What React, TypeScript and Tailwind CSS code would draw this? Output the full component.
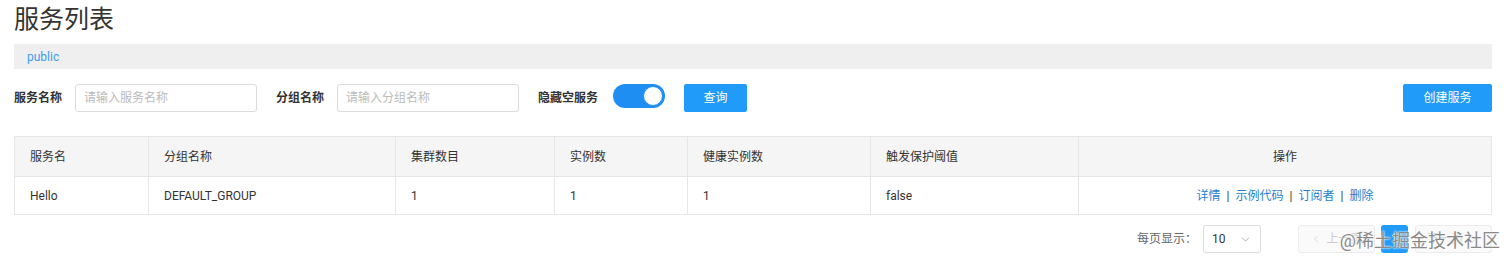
import { ChevronDown, ChevronLeft, ChevronRight } from 'lucide-react';

const columns = [
  { title: '服务名', width: 'w-[134px]' },
  { title: '分组名称', width: 'w-[247px]' },
  { title: '集群数目', width: 'w-[159px]' },
  { title: '实例数', width: 'w-[133px]' },
  { title: '健康实例数', width: 'w-[183px]' },
  { title: '触发保护阈值', width: 'w-[208px]' },
];

const row = ['Hello', 'DEFAULT_GROUP', '1', '1', '1', 'false'];

const actions = ['详情', '示例代码', '订阅者', '删除'];

function Field({ label, placeholder }: { label: string; placeholder: string }) {
  return (
    <div className="flex items-center">
      <span className="w-[61px] text-[12px] font-bold text-[#333]">{label}</span>
      <input
        type="text"
        placeholder={placeholder}
        className="h-[28px] w-[182px] rounded-[3px] border border-[#dcdcdc] bg-white px-[8px] text-[12px] outline-none placeholder:text-[#bbb]"
      />
    </div>
  );
}

export default function App() {
  return (
    <div
      className="relative h-[264px] w-[1512px] overflow-hidden bg-white px-[14px] pr-[20px] text-[#333]"
      style={{ fontFamily: 'Roboto, "Noto Sans CJK SC", sans-serif' }}
    >
      <h1 className="h-[44px] text-[25px] leading-[40px] font-normal text-[#333]">服务列表</h1>

      <div className="flex h-[25px] items-center bg-[#efefef] px-[13px] text-[12px] text-[#3d9ef0]">public</div>

      <div className="mt-[15px] flex h-[28px] items-center">
        <Field label="服务名称" placeholder="请输入服务名称" />
        <div className="ml-[19px]">
          <Field label="分组名称" placeholder="请输入分组名称" />
        </div>
        <span className="ml-[19px] w-[64px] text-[12px] font-bold text-[#333]">隐藏空服务</span>
        <div className="mb-[4px] ml-[11px] flex h-[24px] w-[52px] items-center justify-end rounded-full bg-[#1f8ef2] px-[2px]">
          <div className="h-[20px] w-[20px] rounded-full border border-[#1f8ef2] bg-white" />
        </div>
        <button className="ml-[19px] h-[28px] w-[63px] rounded-[2px] bg-[#209bfa] text-[12px] text-white">查询</button>
        <div className="flex-1" />
        <button className="h-[28px] w-[89px] rounded-[2px] bg-[#209bfa] text-[12px] text-white">创建服务</button>
      </div>

      <table className="mt-[24px] w-[1478px] table-fixed border-collapse text-[12px]">
        <thead>
          <tr className="h-[40px] bg-[#f5f5f5]">
            {columns.map((c) => (
              <th key={c.title} className={`${c.width} border border-[#e6e6e6] px-[15px] text-left font-normal text-[#333]`}>
                {c.title}
              </th>
            ))}
            <th className="border border-[#e6e6e6] text-center font-normal text-[#333]">操作</th>
          </tr>
        </thead>
        <tbody>
          <tr className="h-[38px]">
            {row.map((v, i) => (
              <td key={i} className="border border-[#e6e6e6] px-[15px] text-[#333]">
                {v}
              </td>
            ))}
            <td className="border border-[#e6e6e6] text-center">
              {actions.map((a, i) => (
                <span key={a}>
                  {i > 0 ? <span className="mx-[6px] text-[#333]">|</span> : null}
                  <a className="text-[#1d7fd1]">{a}</a>
                </span>
              ))}
            </td>
          </tr>
        </tbody>
      </table>

      <div className="mt-[10px] flex h-[28px] items-center justify-end">
        <span className="text-[12px] text-[#666]">每页显示：</span>
        <div className="ml-[6px] flex h-[28px] w-[58px] items-center justify-between rounded-[3px] border border-[#dcdcdc] px-[8px] text-[12px] text-[#333]">
          <span>10</span>
          <ChevronDown size={13} strokeWidth={1.5} className="text-[#999]" />
        </div>
        <div className="ml-[37px] flex h-[28px] items-center">
          <div className="flex h-[28px] w-[77px] items-center justify-center gap-[4px] rounded-[3px] border border-[#ececec] bg-[#fafafa] text-[12px] text-[#ccc]">
            <ChevronLeft size={12} strokeWidth={1.5} />
            <span>上一页</span>
          </div>
          <div className="ml-[6px] flex h-[28px] w-[27px] items-center justify-center rounded-[3px] bg-[#209bfa] text-[12px] text-white">1</div>
          <div className="ml-[7px] flex h-[28px] w-[77px] items-center justify-center gap-[4px] rounded-[3px] border border-[#ececec] bg-[#fafafa] text-[12px] text-[#ccc]">
            <span>下一页</span>
            <ChevronRight size={12} strokeWidth={1.5} />
          </div>
        </div>
      </div>

      <div
        className="absolute top-[228px] right-[12px] text-[18px] leading-[26px] text-[#8a8a8a]"
        style={{ textShadow: '0 0 2px #fff, 0 0 2px #fff' }}
      >
        @稀土掘金技术社区
      </div>
    </div>
  );
}
